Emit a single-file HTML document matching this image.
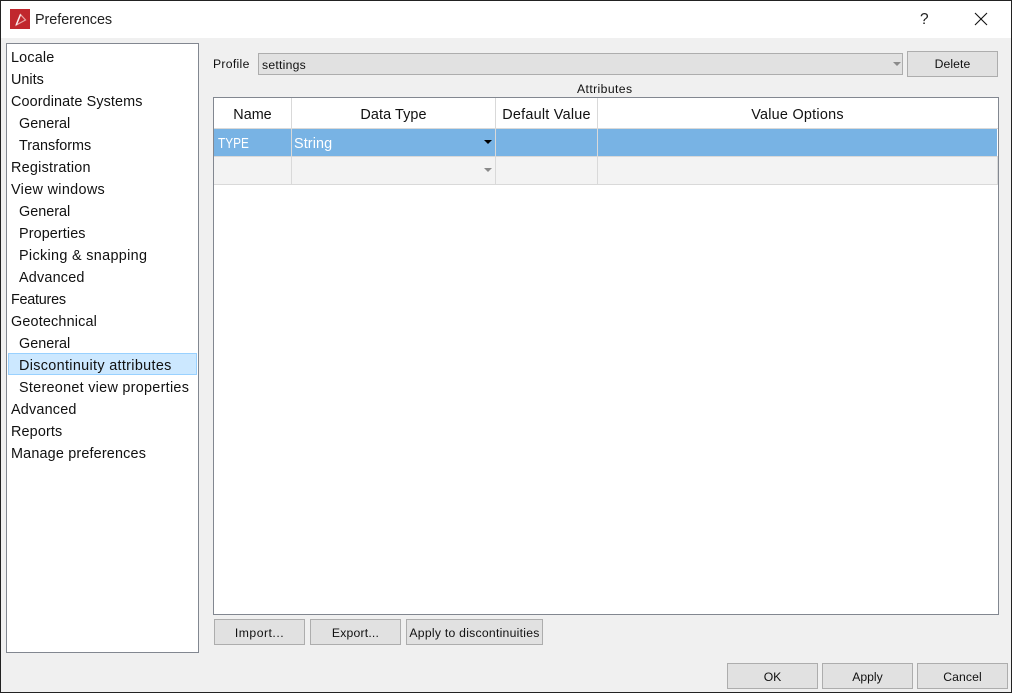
<!DOCTYPE html>
<html><head><meta charset="utf-8"><style>
html,body{margin:0;padding:0;width:1012px;height:693px;overflow:hidden;background:#f0f0f0}
body{font-family:"Liberation Sans",sans-serif;font-size:14.4px;color:#111;position:relative}
div{position:absolute;box-sizing:border-box;white-space:nowrap}
.i{left:11px;height:22px;line-height:24px}
.s{left:19px;height:22px;line-height:24px}
.b{background:#e1e1e1;border:1px solid #adadad;text-align:center;font-size:12.2px;height:26px;line-height:26px;width:91px}
.h{top:98px;height:30px;line-height:35px;text-align:center}
.v{width:1px;background:#d9d9d9}
</style></head><body>
<div style="left:1px;top:1px;width:1010px;height:37px;background:#fff"></div>
<svg style="position:absolute;left:10px;top:9px" width="20" height="20" viewBox="0 0 20 20"><rect width="20" height="20" fill="#c1272d"/><path d="M10.5 5.5 L15.5 11 L6.2 16 Z" fill="none" stroke="#e8a8a8" stroke-width="1.2"/><path d="M10.5 5.5 L6.2 16" fill="none" stroke="#fbeaea" stroke-width="1.5"/></svg>
<div style="left:35px;top:9px;height:22px;line-height:22px;font-size:14.4px;color:#222;letter-spacing:-.05px">Preferences</div>
<div style="left:920px;top:9px;height:20px;line-height:21px;font-size:15.5px;color:#222">?</div>
<svg style="position:absolute;left:974px;top:12px" width="14" height="14" viewBox="0 0 14 14"><path d="M1 1 L13 13 M13 1 L1 13" stroke="#111" stroke-width="1.1" fill="none"/></svg>

<div style="left:6px;top:43px;width:193px;height:610px;background:#fff;border:1px solid #828790"></div>
<div style="left:8px;top:353px;width:189px;height:22px;background:#cce8ff;border:1px solid #99d1ff"></div>
<div class="i" style="top:46px;letter-spacing:.17px">Locale</div>
<div class="i" style="top:68px">Units</div>
<div class="i" style="top:90px;letter-spacing:.11px">Coordinate Systems</div>
<div class="s" style="top:112px">General</div>
<div class="s" style="top:134px">Transforms</div>
<div class="i" style="top:156px;letter-spacing:.25px">Registration</div>
<div class="i" style="top:178px;letter-spacing:.33px">View windows</div>
<div class="s" style="top:200px">General</div>
<div class="s" style="top:222px;letter-spacing:.1px">Properties</div>
<div class="s" style="top:244px;letter-spacing:.33px">Picking &amp; snapping</div>
<div class="s" style="top:266px;letter-spacing:.2px">Advanced</div>
<div class="i" style="top:288px;letter-spacing:-.25px">Features</div>
<div class="i" style="top:310px;letter-spacing:.17px">Geotechnical</div>
<div class="s" style="top:332px">General</div>
<div class="s" style="top:354px;letter-spacing:.33px">Discontinuity attributes</div>
<div class="s" style="top:376px;letter-spacing:.28px">Stereonet view properties</div>
<div class="i" style="top:398px;letter-spacing:.2px">Advanced</div>
<div class="i" style="top:420px;letter-spacing:.14px">Reports</div>
<div class="i" style="top:442px;letter-spacing:.17px">Manage preferences</div>

<div style="left:213px;top:54px;height:20px;line-height:20px;font-size:12.2px;letter-spacing:.3px">Profile</div>
<div style="left:258px;top:53px;width:645px;height:22px;background:#e1e1e1;border:1px solid #adadad;font-size:12.2px;line-height:22px;padding-left:3px;letter-spacing:.25px">settings</div>
<div style="left:893px;top:62px;width:0;height:0;border-left:4px solid transparent;border-right:4px solid transparent;border-top:4px solid #8a8a8a"></div>
<div class="b" style="left:907px;top:51px;line-height:24px;letter-spacing:.1px">Delete</div>
<div style="left:577px;top:81px;height:16px;line-height:17px;font-size:12.2px;letter-spacing:.4px">Attributes</div>

<div style="left:213px;top:97px;width:786px;height:518px;background:#fff;border:1px solid #828790"></div>
<div class="h" style="left:214px;width:77px">Name</div>
<div class="h" style="left:292px;width:203px;letter-spacing:.1px">Data Type</div>
<div class="h" style="left:496px;width:101px;letter-spacing:.25px">Default Value</div>
<div class="h" style="left:598px;width:399px;letter-spacing:.25px">Value Options</div>
<div style="left:214px;top:128px;width:784px;height:1px;background:#d9d9d9"></div>
<div style="left:214px;top:129px;width:783px;height:27px;background:#78b3e4"></div>
<div style="left:214px;top:156px;width:784px;height:1px;background:#d9d9d9"></div>
<div style="left:214px;top:157px;width:783px;height:27px;background:#f3f3f3"></div>
<div style="left:214px;top:184px;width:784px;height:1px;background:#d9d9d9"></div>
<div class="v" style="left:291px;top:98px;height:87px"></div>
<div class="v" style="left:495px;top:98px;height:87px"></div>
<div class="v" style="left:597px;top:98px;height:87px"></div>
<div style="left:997px;top:157px;width:1px;height:28px;background:#d9d9d9"></div>
<div style="left:218px;top:132px;height:22px;line-height:24px;color:#fff;transform:scaleX(.82);transform-origin:left center">TYPE</div>
<div style="left:294px;top:132px;height:22px;line-height:24px;color:#fff;letter-spacing:.1px">String</div>
<div style="left:484px;top:140px;width:0;height:0;border-left:4px solid transparent;border-right:4px solid transparent;border-top:4px solid #000"></div>
<div style="left:484px;top:168px;width:0;height:0;border-left:4px solid transparent;border-right:4px solid transparent;border-top:4px solid #8a8a8a"></div>

<div class="b" style="left:214px;top:619px;letter-spacing:.5px">Import...</div>
<div class="b" style="left:310px;top:619px;letter-spacing:.2px">Export...</div>
<div class="b" style="left:406px;top:619px;width:137px;letter-spacing:.26px">Apply to discontinuities</div>
<div class="b" style="left:727px;top:663px">OK</div>
<div class="b" style="left:822px;top:663px">Apply</div>
<div class="b" style="left:917px;top:663px;letter-spacing:.1px">Cancel</div>

<div style="left:0;top:0;width:1012px;height:693px;border:1px solid #222"></div>
</body></html>
